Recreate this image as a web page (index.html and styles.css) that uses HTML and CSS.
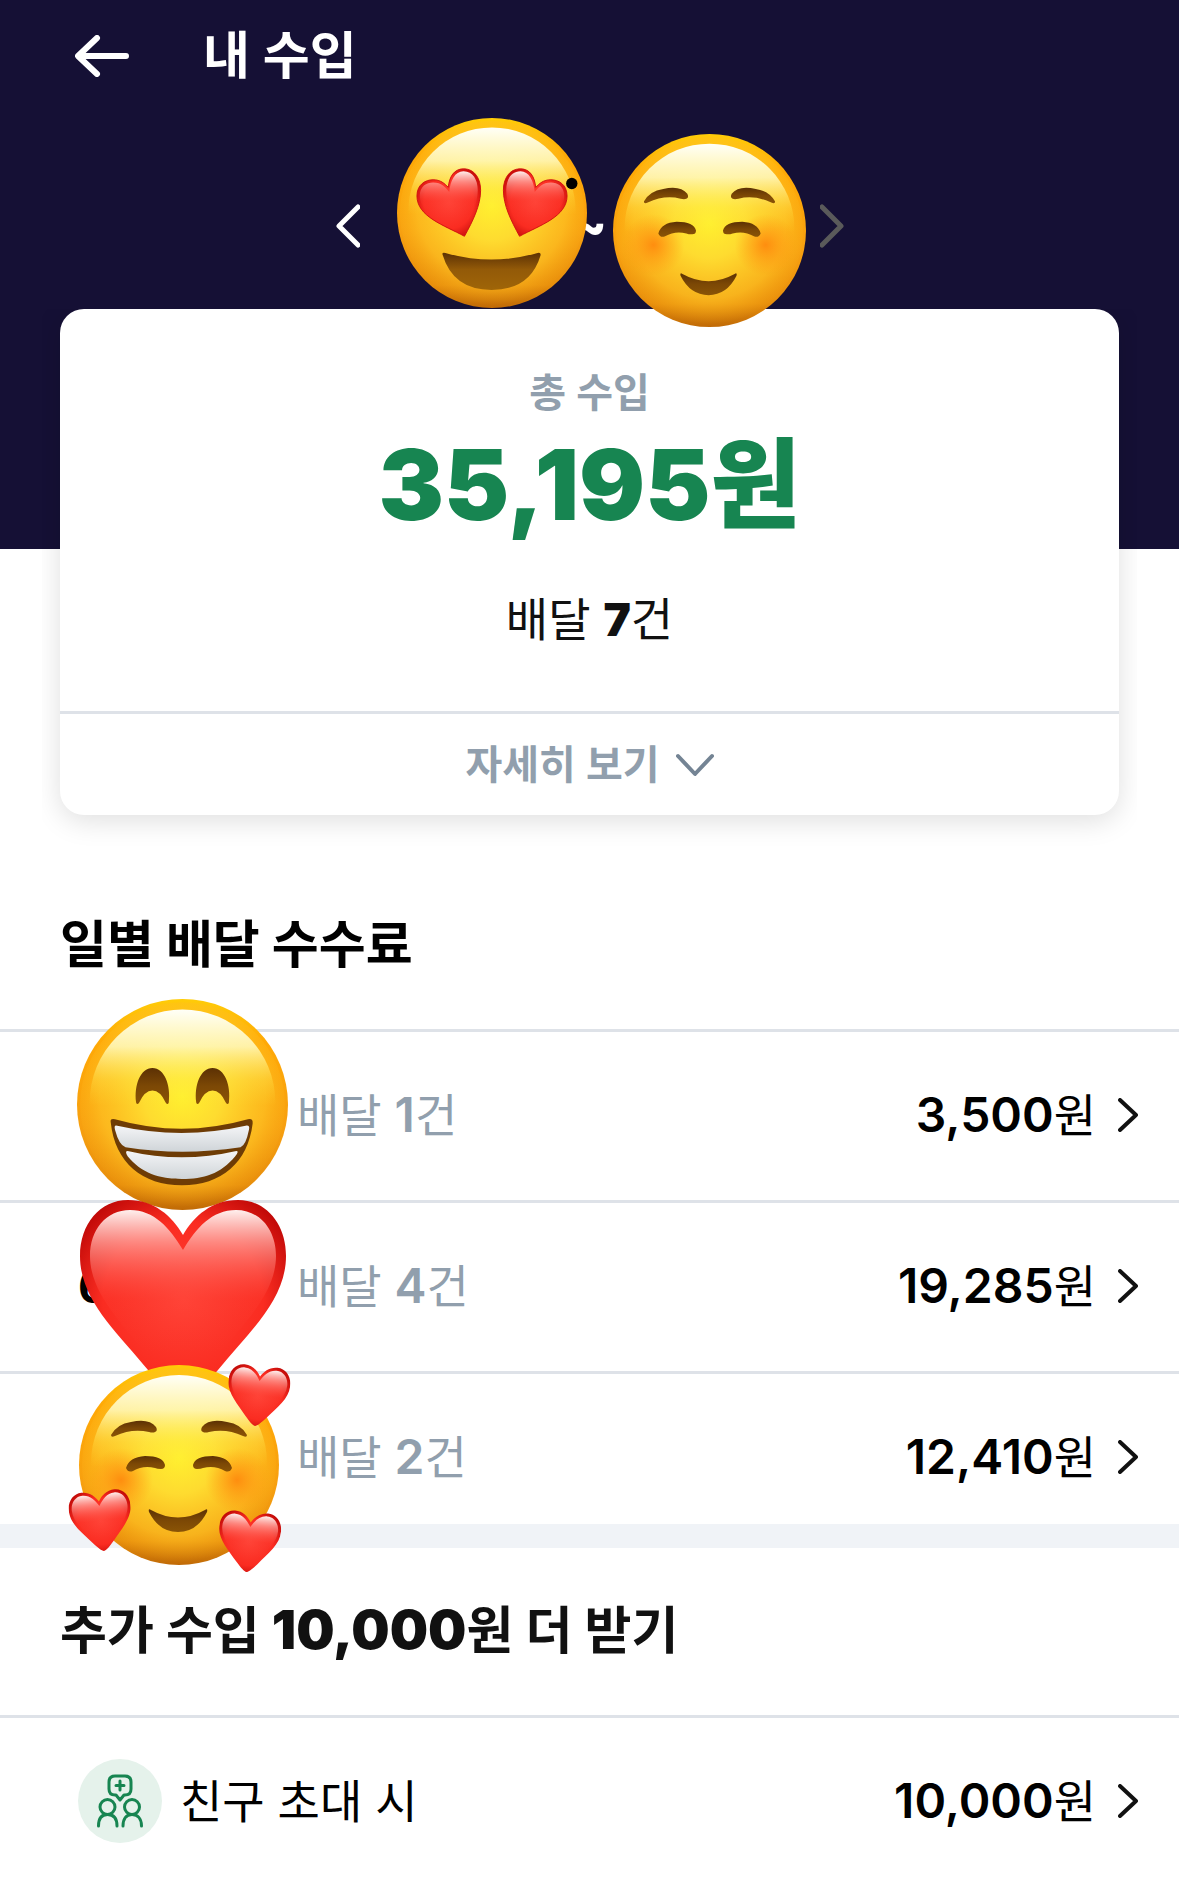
FILE: index.html
```html
<!DOCTYPE html>
<html lang="ko">
<head>
    <meta charset="UTF-8">
    <meta name="viewport" content="width=device-width, initial-scale=1.0">
    <title>내 수입</title>
    <link rel="stylesheet" href="styles.css">
</head>
<body>
    <!-- shared emoji parts -->
    <svg class="defs" aria-hidden="true">
        <defs>
            <linearGradient id="skin" x1="0" y1="0" x2="0" y2="1">
                <stop offset="0" stop-color="#ffcc08"/>
                <stop offset="0.2" stop-color="#ffa906"/>
                <stop offset="0.6" stop-color="#f7a010"/>
                <stop offset="0.88" stop-color="#e88f0c"/>
                <stop offset="1" stop-color="#c06a06"/>
            </linearGradient>
            <radialGradient id="glow" cx="0.5" cy="0.46" r="0.54">
                <stop offset="0" stop-color="#fff02f"/>
                <stop offset="0.35" stop-color="#ffe233" stop-opacity="0.9"/>
                <stop offset="0.75" stop-color="#ffc525" stop-opacity="0.65"/>
                <stop offset="1" stop-color="#ffb41a" stop-opacity="0"/>
            </radialGradient>
            <linearGradient id="shine" x1="0" y1="0" x2="0" y2="1">
                <stop offset="0" stop-color="#fffff8"/>
                <stop offset="0.2" stop-color="#fffbc0" stop-opacity="0.85"/>
                <stop offset="0.38" stop-color="#fff25a" stop-opacity="0.3"/>
                <stop offset="0.52" stop-color="#ffe83a" stop-opacity="0"/>
            </linearGradient>
            <radialGradient id="blush">
                <stop offset="0" stop-color="#ff800a" stop-opacity="0.8"/>
                <stop offset="1" stop-color="#ff9410" stop-opacity="0"/>
            </radialGradient>
            <linearGradient id="brown" x1="0" y1="0" x2="0" y2="1">
                <stop offset="0" stop-color="#5c3104"/>
                <stop offset="0.5" stop-color="#7c4805"/>
                <stop offset="1" stop-color="#8a5406"/>
            </linearGradient>
            <linearGradient id="mouth" x1="0" y1="0" x2="0" y2="1">
                <stop offset="0" stop-color="#5c3104"/>
                <stop offset="0.45" stop-color="#935a08"/>
                <stop offset="1" stop-color="#9f6508"/>
            </linearGradient>
            <linearGradient id="teeth" x1="0" y1="0" x2="0" y2="1">
                <stop offset="0" stop-color="#f4f5f7"/>
                <stop offset="1" stop-color="#cfd4d8"/>
            </linearGradient>
            <radialGradient id="red" cx="0.5" cy="0.5" r="0.6">
                <stop offset="0" stop-color="#ff4236"/>
                <stop offset="0.65" stop-color="#fa2c21"/>
                <stop offset="1" stop-color="#c20a08"/>
            </radialGradient>
            <linearGradient id="redShine" x1="0" y1="0" x2="0" y2="1">
                <stop offset="0" stop-color="#fff0ee"/>
                <stop offset="0.18" stop-color="#ff9f98" stop-opacity="0.8"/>
                <stop offset="0.5" stop-color="#ff4a3e" stop-opacity="0.2"/>
                <stop offset="0.8" stop-color="#ff3b30" stop-opacity="0"/>
            </linearGradient>
        </defs>
        <symbol id="face" viewBox="0 0 200 200">
            <circle cx="100" cy="100" r="100" fill="url(#skin)"/>
            <circle cx="100" cy="100" r="97" fill="url(#glow)"/>
            <ellipse cx="100" cy="98" rx="88" ry="88" fill="url(#shine)"/>
        </symbol>
        <symbol id="heart" viewBox="0 0 206 200">
            <path d="M103 35C92 16 74 0 48 0C20 0 0 24 0 56C0 100 37 132 68 170C84 188 96 200 103 200C110 200 122 188 138 170C169 132 206 100 206 56C206 24 186 0 158 0C132 0 114 16 103 35Z" fill="url(#red)"/>
            <path d="M103 50C90 28 74 10 50 10C26 10 10 30 10 56C10 94 44 126 72 160C86 176 97 188 103 188C109 188 120 176 134 160C162 126 196 94 196 56C196 30 180 10 156 10C132 10 116 28 103 50Z" fill="url(#redShine)"/>
        </symbol>
        <symbol id="eye-heart" viewBox="0 0 200 200">
            <path d="M71 124.500C50 113 21 104 21 82C21 70 30 65 38 65C46 65 50 69 54 73C55 62 60 53.500 70 53.500C82 53.500 88 64 88 76C88 92 80 108 71 124.500Z" fill="url(#red)" stroke="#cf1210" stroke-width="1"/>
            <path d="M70 119C52 110 24 101 24 82C24 72 31 68 38 68C47 68 51 73 55 78C56 66 61 56 70 56C80 56 85 65 85 76C85 90 78 105 70 119Z" fill="url(#redShine)"/>
        </symbol>
        <symbol id="smile" viewBox="0 0 200 200">
            <use href="#face"/>
            <circle cx="42" cy="115" r="32" fill="url(#blush)"/>
            <circle cx="158" cy="115" r="32" fill="url(#blush)"/>
            <g id="smile-half" fill="url(#brown)">
                <path d="M32 70Q38 59 52 57Q70 53 77 62Q79 66 76 67Q74 68 70 67Q53 63 36 71Q32 73 32 70Z"/>
                <path d="M47 103Q50 92 66 91Q84 91 86 100Q86 104 82 104Q78 104 76 103Q64 100 54 106Q49 108 47 103Z"/>
            </g>
            <use href="#smile-half" transform="translate(200 0) scale(-1 1)"/>
            <path d="M72 145Q99 160 126 145Q129 143 128 147Q118 167 99 167Q80 167 70 147Q69 143 72 145Z" fill="url(#brown)"/>
        </symbol>
    </svg>

    <header class="top">
        <div class="title-bar">
            <button class="icon-btn" type="button" aria-label="뒤로">
                <svg width="54" height="42" viewBox="0 0 54 42"><path d="M51 21H4M22 3L3 21L22 39" fill="none" stroke="#fff" stroke-width="6" stroke-linecap="round" stroke-linejoin="round"/></svg>
            </button>
            <h1>내 수입</h1>
        </div>
        <div class="period">
            <button class="icon-btn" type="button" aria-label="이전 주">
                <svg width="24" height="44" viewBox="0 0 24 44"><path d="M22 3L3 22L22 41" fill="none" stroke="#fff" stroke-width="5" stroke-linecap="round" stroke-linejoin="round"/></svg>
            </button>
            <span class="tilde">~</span>
            <button class="icon-btn" type="button" aria-label="다음 주" disabled>
                <svg width="24" height="44" viewBox="0 0 24 44"><path d="M2 3L21 22L2 41" fill="none" stroke="#5a5a5a" stroke-width="5" stroke-linecap="round" stroke-linejoin="round"/></svg>
            </button>
            <svg class="sticker love" viewBox="0 0 200 200">
                <use href="#face"/>
                <use href="#eye-heart"/>
                <use href="#eye-heart" transform="translate(200 0) scale(-1 1)"/>
                <path d="M48 144Q47 141 51 142Q99 156 148 142Q152 141 151 145Q140 181 99.500 181Q59 181 48 144Z" fill="url(#mouth)"/>
                <circle cx="184" cy="69" r="6" fill="#000"/>
            </svg>
            <svg class="sticker shy" viewBox="0 0 200 200"><use href="#smile"/></svg>
        </div>
    </header>

    <section class="card">
        <div class="summary">
            <h2>총 수입</h2>
            <p class="total">35,195원</p>
            <p class="count">배달 <b>7</b>건</p>
        </div>
        <button class="more" type="button">
            자세히 보기
            <svg width="38" height="24" viewBox="0 0 38 24"><path d="M2 3L19 21L36 3" fill="none" stroke="#748494" stroke-width="4" stroke-linecap="round" stroke-linejoin="round"/></svg>
        </button>
    </section>

    <section class="daily">
        <h2 class="section-title">일별 배달 수수료</h2>
        <ul class="list">
            <li>
                <a class="row" href="#">
                    <span class="date"></span>
                    <span class="deliveries">배달 <b>1</b>건</span>
                    <span class="amount"><b>3,500</b>원</span>
                    <svg class="arrow" viewBox="0 0 20 34"><path d="M2 2L18 17L2 32" fill="none" stroke="#111" stroke-width="4" stroke-linecap="round" stroke-linejoin="round"/></svg>
                </a>
                <svg class="sticker grin" viewBox="0 0 200 200">
                    <use href="#face"/>
                    <path id="grin-eye" d="M56 98C54 82 60 65.500 71.500 65.500C83 65.500 89 82 87 98Q86 101 84 98Q79 87 71.500 86.700Q64 87 59 98Q57 101 56 98Z" fill="url(#brown)"/>
                    <use href="#grin-eye" x="57"/>
                    <path d="M32 117Q31 113 36 114Q99 132 162 114Q167 113 166.500 118C162 155 137 176.600 99.500 176.600C62 176.600 36 155 32 117Z" fill="#6e3c05"/>
                    <path d="M37 120Q99 134 161 120Q164 120 163 124Q160 139 155 140.500Q99 149 46 140.500Q40 139 36 124Q35 120 37 120Z" fill="url(#teeth)"/>
                    <path d="M48 144Q99 156 151 144Q154 144 150 149C136 166 120 170.500 99.500 170.500C78 170.500 61 165 48 149Q45 144 48 144Z" fill="url(#teeth)"/>
                </svg>
            </li>
            <li>
                <a class="row" href="#">
                    <span class="date">6</span>
                    <span class="deliveries">배달 <b>4</b>건</span>
                    <span class="amount"><b>19,285</b>원</span>
                    <svg class="arrow" viewBox="0 0 20 34"><path d="M2 2L18 17L2 32" fill="none" stroke="#111" stroke-width="4" stroke-linecap="round" stroke-linejoin="round"/></svg>
                </a>
                <svg class="sticker big-heart" viewBox="0 0 206 200"><use href="#heart"/></svg>
            </li>
            <li class="last">
                <a class="row" href="#">
                    <span class="date"></span>
                    <span class="deliveries">배달 <b>2</b>건</span>
                    <span class="amount"><b>12,410</b>원</span>
                    <svg class="arrow" viewBox="0 0 20 34"><path d="M2 2L18 17L2 32" fill="none" stroke="#111" stroke-width="4" stroke-linecap="round" stroke-linejoin="round"/></svg>
                </a>
                <svg class="sticker hearts" viewBox="0 0 217 208">
                    <use href="#smile" x="8" y="0" width="200" height="200"/>
                    <use href="#heart" x="156" y="0" width="62" height="62" transform="rotate(6 187 31)"/>
                    <use href="#heart" x="-1" y="125" width="62" height="62" transform="rotate(-6 30 156)"/>
                    <use href="#heart" x="147" y="146" width="62" height="62" transform="rotate(5 178 177)"/>
                </svg>
            </li>
        </ul>
    </section>

    <section class="bonus">
        <h2 class="section-title">추가 수입 <b>10,000</b>원 더 받기</h2>
        <ul class="list">
            <li>
                <a class="row" href="#">
                    <svg class="invite" viewBox="0 0 84 84">
                        <circle cx="42" cy="42" r="42" fill="#e5f2eb"/>
                        <g fill="none" stroke="#178551" stroke-width="3" stroke-linecap="round" stroke-linejoin="round">
                            <path d="M37 17H47Q53 17 53 23V30Q53 36 47 36H46L42 41L38 36H37Q31 36 31 30V23Q31 17 37 17ZM42 22V31M38 26.500H46"/>
                            <circle cx="29.500" cy="48" r="7.500"/>
                            <circle cx="54" cy="48" r="7.500"/>
                            <path d="M20.500 67C20.500 59 24 55.500 29.500 55.500S39 59 39 67M45 67C45 59 49 55.500 54 55.500S63.500 59 63.500 67"/>
                        </g>
                    </svg>
                    <span class="label">친구 초대 시</span>
                    <span class="amount"><b>10,000</b>원</span>
                    <svg class="arrow" viewBox="0 0 20 34"><path d="M2 2L18 17L2 32" fill="none" stroke="#111" stroke-width="4" stroke-linecap="round" stroke-linejoin="round"/></svg>
                </a>
            </li>
        </ul>
    </section>
</body>
</html>
```
FILE: styles.css
```css
* {
    box-sizing: border-box;
}

body {
    margin: 0;
    background: #fff;
    color: #111;
    font-family: Inter, "Noto Sans CJK KR", sans-serif;
    font-size: 46px;
    line-height: 60px;
}

h1, h2, p, ul {
    margin: 0;
    padding: 0;
}

button {
    font: inherit;
    border: none;
    background: none;
    padding: 0;
    cursor: pointer;
}

svg {
    display: block;
    flex-shrink: 0;
}

.defs {
    position: absolute;
    width: 0;
    height: 0;
}

.sticker {
    position: absolute;
    z-index: 2;
    overflow: visible;
    pointer-events: none;
}

.top {
    background: #151035;
    padding: 24px 0 293px;
}

.title-bar {
    display: flex;
    align-items: center;
    gap: 74px;
    padding: 0 75px;
    height: 64px;
}

.title-bar h1 {
    color: #fff;
    font-size: 51px;
    font-weight: 600;
}

.period {
    position: relative;
    display: flex;
    align-items: center;
    justify-content: space-between;
    width: 508px;
    height: 60px;
    margin: 108px auto 0;
}

.tilde {
    color: #fff;
    font-size: 51px;
    font-weight: 800;
}

.love {
    width: 190px;
    height: 190px;
    left: 61px;
    top: -78px;
}

.shy {
    width: 193px;
    height: 193px;
    left: 277px;
    top: -62px;
}

.card {
    margin: -240px 60px 0;
    background: #fff;
    border-radius: 24px;
    box-shadow: 0 6px 28px rgba(0, 0, 0, 0.13);
    clip-path: inset(0 -18px -40px -18px);
    text-align: center;
}

.summary {
    padding: 54px 20px 62px;
}

.summary h2 {
    color: #919fad;
    font-size: 40px;
    font-weight: 600;
}

.total {
    color: #178551;
    font-size: 98px;
    font-weight: 900;
    line-height: 124px;
}

.count {
    margin-top: 42px;
}

.count b {
    font-weight: 900;
}

.more {
    display: flex;
    align-items: center;
    justify-content: center;
    gap: 16px;
    width: 100%;
    height: 104px;
    border-top: 3px solid #dee2e8;
    color: #919fad;
    font-size: 40px;
    font-weight: 600;
}

.section-title {
    padding: 0 60px;
    font-size: 51px;
    font-weight: 700;
}

.section-title b {
    font-size: 54px;
    font-weight: 900;
}

.daily {
    padding-top: 100px;
    border-bottom: 24px solid #f0f3f7;
}

.daily .section-title {
    color: #000;
}

.list {
    list-style: none;
    margin-top: 54px;
}

.list li {
    position: relative;
    border-top: 3px solid #dee2e8;
}

.row {
    display: flex;
    align-items: center;
    height: 168px;
    padding: 0 41px 2px 78px;
    color: #000;
    text-decoration: none;
}

.row b {
    font-size: 48px;
    font-weight: 600;
}

.last {
    height: 153px;
}

.date {
    width: 219px;
    font-weight: 700;
}

.deliveries {
    color: #919fad;
}

.amount {
    margin-left: auto;
}

.arrow {
    width: 20px;
    height: 34px;
    margin-left: 22px;
}

.grin {
    width: 211px;
    height: 211px;
    left: 77px;
    top: -33px;
}

.big-heart {
    width: 206px;
    height: 200px;
    left: 80px;
    top: -3px;
}

.hearts {
    width: 217px;
    height: 208px;
    left: 71px;
    top: -9px;
}

.bonus {
    padding-top: 52px;
}

.invite {
    width: 84px;
    height: 84px;
    margin-right: 18px;
}
```
